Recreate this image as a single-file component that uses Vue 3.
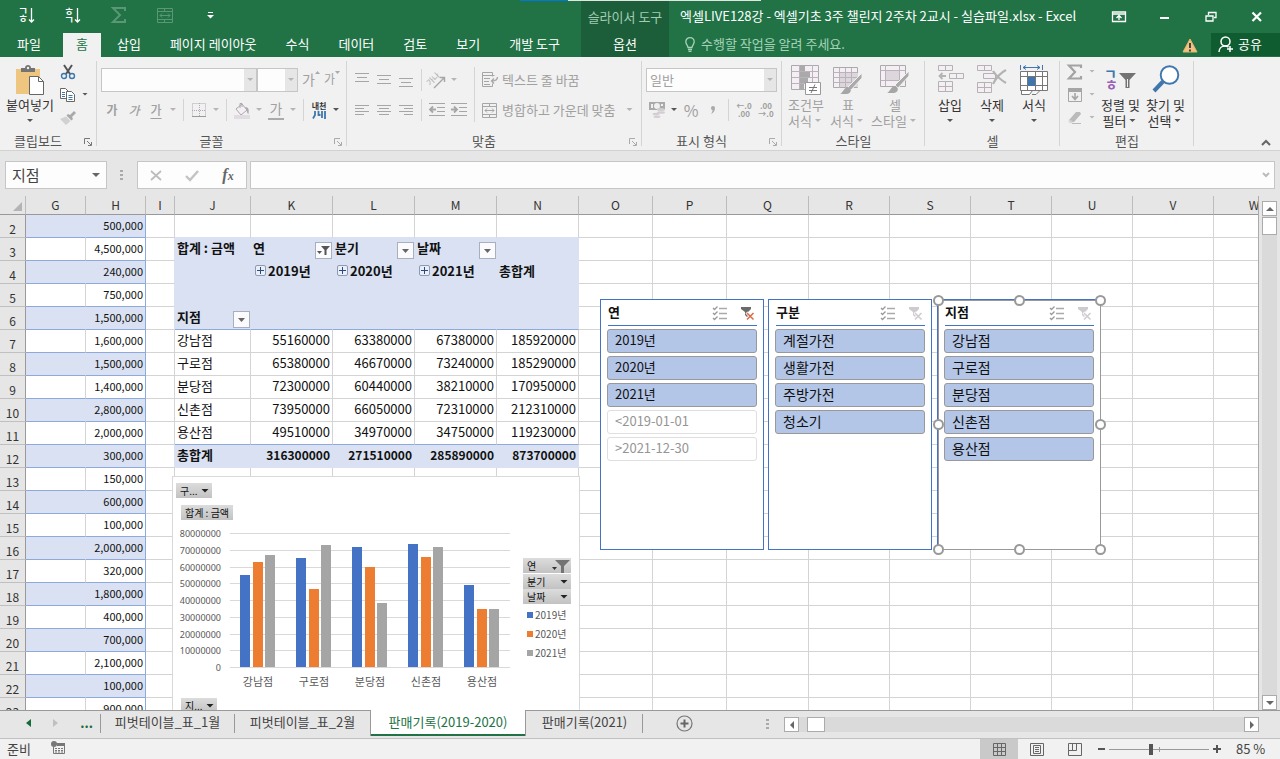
<script setup>
const tabs = ['삽입', '페이지 레이아웃', '수식', '데이터', '검토', '보기', '개발 도구']

const columns = [
  ['G', 60], ['H', 60], ['I', 29], ['J', 76], ['K', 82], ['L', 82], ['M', 82], ['N', 82],
  ['O', 74], ['P', 74], ['Q', 82], ['R', 81], ['S', 81], ['T', 81], ['U', 81], ['V', 81], ['W', 81],
].map(([name, width]) => ({ name, width }))
const tableWidth = 26 + columns.reduce((sum, c) => sum + c.width, 0)

const amounts = [
  '500,000', '4,500,000', '240,000', '750,000', '1,500,000', '1,600,000', '1,500,000', '1,400,000',
  '2,800,000', '2,000,000', '300,000', '150,000', '600,000', '100,000', '2,000,000', '320,000',
  '1,800,000', '400,000', '700,000', '2,100,000', '100,000', '900,000',
]

const pivot = {
  J3: { text: '합계 : 금액' },
  K3: { text: '연', filter: 'active' },
  L3: { text: '분기', filter: 'plain' },
  M3: { text: '날짜', filter: 'plain' },
  K4: { text: '2019년', expand: true },
  L4: { text: '2020년', expand: true },
  M4: { text: '2021년', expand: true },
  N4: { text: '총합계' },
  J6: { text: '지점', filter: 'plain' },
}
const pivotRows = [
  ['강남점', 55160000, 63380000, 67380000, 185920000],
  ['구로점', 65380000, 46670000, 73240000, 185290000],
  ['분당점', 72300000, 60440000, 38210000, 170950000],
  ['신촌점', 73950000, 66050000, 72310000, 212310000],
  ['용산점', 49510000, 34970000, 34750000, 119230000],
  ['총합계', 316300000, 271510000, 285890000, 873700000],
]
pivotRows.forEach((values, r) => {
  values.forEach((v, c) => {
    pivot['JKLMN'[c] + (7 + r)] = { text: String(v), number: c > 0 }
  })
})

function cellClass(name, row) {
  const cls = []
  const even = row % 2 === 0
  if (name === 'G' || name === 'H') {
    cls.push('band')
    if (even) cls.push('fill')
    if (name === 'G' && even) cls.push('joined')
    if (name === 'H') cls.push('amount')
  }
  const headRow = (row >= 3 && row <= 6) || row === 12
  if (name === 'I' && headRow) cls.push('joined')
  if ('JKLMN'.includes(name)) {
    if (headRow) cls.push('fill', 'joined', 'strong', 'flat')
    if (row === 2) cls.push('flat')
    if (row === 6 || row === 11) cls.push('ruled')
    if (pivot[name + row]?.number) cls.push('number')
  }
  return cls
}

const rows = amounts.map((amount, i) => {
  const n = i + 2
  return {
    n,
    cells: columns.map((c) => ({
      key: c.name + n,
      cls: cellClass(c.name, n),
      ...(c.name === 'H' ? { text: amount } : pivot[c.name + n] || {}),
    })),
  }
})

const slicers = [
  { id: 'year', title: '연', on: ['2019년', '2020년', '2021년'], off: ['<2019-01-01', '>2021-12-30'], filtered: true },
  { id: 'kind', title: '구분', on: ['계절가전', '생활가전', '주방가전', '청소기'], off: [] },
  { id: 'branch', title: '지점', on: ['강남점', '구로점', '분당점', '신촌점', '용산점'], off: [], selected: true },
]

const seriesColors = ['#4472c4', '#ed7d31', '#a5a5a5']
const barOffsets = [0, 13, 25]
const groups = pivotRows.slice(0, 5).map((r, g) => ({
  label: r[0],
  cx: 85 + g * 56,
  bars: r.slice(1, 4).map((v, s) => {
    const h = Math.round((v / 80000000) * 133)
    return { x: 67 + g * 56 + barOffsets[s], y: 190 - h, h, color: seriesColors[s] }
  }),
}))
const ticks = Array.from({ length: 9 }, (_, i) => ({
  label: String(i * 10000000),
  y: Math.round(190 - i * 16.75),
}))
const legend = ['2019년', '2020년', '2021년']
const aligns = [
  { name: '위쪽 맞춤', d: 'M1 3.5h14M3 7.5h10M1 11.5h14' },
  { name: '가운데 맞춤', d: 'M1 5.5h14M3 9.5h10M1 13.5h14' },
  { name: '아래쪽 맞춤', d: 'M1 8.5h14M3 12.5h10M1 16.5h14' },
]
const hAligns = [
  { name: '왼쪽 맞춤', d: 'M1 2.5h14M1 5.5h9M1 8.5h14M1 11.5h9' },
  { name: '중앙 맞춤', d: 'M1 2.5h14M3 5.5h10M1 8.5h14M3 11.5h10' },
  { name: '오른쪽 맞춤', d: 'M1 2.5h14M6 5.5h9M1 8.5h14M6 11.5h9' },
]
</script>

<template>
  <div class="app">
    <header class="top">
      <div class="strip"><i></i><b></b></div>
      <div class="quick">
        <button aria-label="오름차순 정렬">
          <svg width="16" height="18"><text x="-1" y="9" class="jamo">ㄱ</text><text x="-1" y="17" class="jamo">ㅎ</text><path d="M12.500 2v14M10 13.500l2.500 2.500 2.500-2.500" class="w" /></svg>
        </button>
        <button aria-label="내림차순 정렬">
          <svg width="16" height="18"><text x="-1" y="10" class="jamo">ㅎ</text><text x="-1" y="18" class="jamo">ㄱ</text><path d="M12.500 2v14M10 13.500l2.500 2.500 2.500-2.500" class="w" /></svg>
        </button>
        <button aria-label="합계" class="dim">
          <svg width="16" height="18"><path d="M14 5V2H2l7 7-7 7h12v-3" fill="none" stroke="#5a9774" stroke-width="2" /></svg>
        </button>
        <button aria-label="병합" class="dim">
          <svg width="16" height="18" fill="none" stroke="#5a9774"><path d="M.5 2.500h15v14H.5zM.5 5.500h15M.5 13.500h15M7.500 2.500v3M7.500 13.500v3M3 9.500h10M5 7.500l-2 2 2 2M11 7.500l2 2-2 2" /></svg>
        </button>
        <button aria-label="빠른 실행 사용자 지정">
          <svg width="8" height="8"><path d="M1 1.500h5" stroke="#fff" /><path d="M0 4h7L3.500 7.500z" fill="#fff" /></svg>
        </button>
      </div>
      <div class="context-name">슬라이서 도구</div>
      <div class="titlebar">
        <span class="doc">엑셀LIVE128강 - 엑셀기초 3주 챌린지 2주차 2교시 - 실습파일.xlsx - Excel</span>
        <div class="controls">
          <button aria-label="리본 메뉴 표시 옵션"><svg width="14" height="12" fill="none" stroke="#fff"><path d="M.5 1h13v9.500H.5zM.5 3h13M7 9V5M4.500 7L7 4.500 9.500 7" stroke-width="1.300" /></svg></button>
          <button aria-label="최소화"><svg width="12" height="12"><path d="M1 7h9" stroke="#fff" stroke-width="2" /></svg></button>
          <button aria-label="이전 크기로"><svg width="12" height="12" fill="none" stroke="#fff"><path d="M1 5h7v5H1zM3.500 4V1.500H11v5H9" stroke-width="1.300" /></svg></button>
          <button aria-label="닫기"><svg width="12" height="12"><path d="M1.500 1.500l8.500 8.500M10 1.500L1.500 10" stroke="#fff" stroke-width="2.200" /></svg></button>
        </div>
      </div>
      <nav class="tabs">
        <button class="file">파일</button>
        <button class="on">홈</button>
        <button v-for="t in tabs" :key="t">{{ t }}</button>
      </nav>
      <button class="context-tab">옵션</button>
      <div class="assist">
        <label class="tell">
          <svg width="10" height="15" fill="none" stroke="#a6d2b8"><path d="M3 10.500C3 8.500.8 7.500.8 4.800A4.200 4.200 0 0 1 9.200 4.800C9.200 7.500 7 8.500 7 10.500zM3 12.500h4M3.500 14.300h3" stroke-width="1.300" /></svg>
          <input type="text" placeholder="수행할 작업을 알려 주세요." />
        </label>
        <svg class="warn" width="16" height="15"><path d="M8 1l7 13H1z" fill="#f0c383" stroke="#e8b56c" stroke-linejoin="round" /><path d="M8 5v5M8 11.500v2" stroke="#444" stroke-width="2" /></svg>
        <button class="share">
          <svg width="16" height="17" fill="none" stroke="#fff" stroke-width="1.500"><circle cx="7.500" cy="5.500" r="4.500" /><path d="M1 16c0-4 3-6 6-6 1.500 0 2.500.4 3.500 1M12 10v6M9 13h6" /></svg>
          <span>공유</span>
        </button>
      </div>
    </header>

    <section class="ribbon">
      <div class="group g-clip">
        <div class="body">
          <button class="big">
            <svg width="30" height="30"><path d="M1 4h24v25H1z" fill="#eec680" /><path d="M6 7V3h4c0-4 6-4 6 0h4v4z" fill="#737373" /><circle cx="13" cy="3" r="1.200" fill="#f1f1f1" /><path d="M14.500 11.500h9l5 5v13h-14z" fill="#fff" stroke="#666" /><path d="M23.500 11.500v5h5" fill="none" stroke="#666" /></svg>
            <span>붙여넣기</span><i class="caret"></i>
          </button>
          <div class="stack">
            <div><button class="ico" aria-label="잘라내기"><svg width="16" height="16" fill="none"><path d="M4 1l6 9M12 1L6 10" stroke="#555" stroke-width="2" /><circle cx="4" cy="12" r="2.500" stroke="#3e76ad" stroke-width="1.400" /><circle cx="12" cy="12" r="2.500" stroke="#3e76ad" stroke-width="1.400" /></svg></button></div>
            <div><button class="ico" aria-label="복사"><svg width="16" height="16" fill="#fff" stroke="#666"><path d="M.5 1.500h5l3 3v7h-8z" /><path d="M6.500 4.500h5l3 3v7h-8z" /><path d="M2 5.500h3M2 7.500h3M2 9.500h3M8.500 8.500h4M8.500 10.500h4M8.500 12.500h4" stroke="#3e76ad" /></svg></button><i class="caret"></i></div>
            <div><button class="ico" aria-label="서식 복사"><svg width="16" height="16"><path d="M14 1l2 2-4 4 1 2-1.500 1.500-5-5L8 4l2 1z" fill="#a9a9a9" /><path d="M6 6.500l4.500 4.500L6 15 0 9z" fill="#d3d0d3" /></svg></button></div>
          </div>
        </div>
        <div class="foot"><span>클립보드</span><button class="launch" aria-label="클립보드 옵션"><svg width="8" height="8" fill="none" stroke="#777"><path d="M.5 6V.5H6M3 3l4 4M7.500 4v3.500H4" /></svg></button></div>
      </div>

      <div class="group g-font">
        <div class="body rows">
          <div class="row">
            <span class="combo wide"><select aria-label="글꼴" disabled><option></option></select><i class="caret off"></i></span>
            <span class="combo narrow"><select aria-label="글꼴 크기" disabled><option></option></select><i class="caret off"></i></span>
            <button class="ico off grow" aria-label="글꼴 크기 크게"><span class="lg">가</span><svg width="5" height="4"><path d="M0 3h5L2.500 0z" fill="#aaa" /></svg></button>
            <button class="ico off grow" aria-label="글꼴 크기 작게"><span>가</span><svg width="5" height="4"><path d="M0 0h5L2.500 3z" fill="#aaa" /></svg></button>
          </div>
          <div class="row">
            <button class="ico off ga"><b>가</b></button>
            <button class="ico off ga"><em>가</em></button>
            <button class="ico off ga"><u>가</u></button><i class="caret off"></i>
            <i class="sep"></i>
            <button class="ico" aria-label="테두리"><svg width="14" height="15" fill="none" stroke="#b3a9b3"><path d="M.5.5h13v13H.5zM7.500 0v13M0 7.500h13" stroke-dasharray="1 1" /><path d="M0 13.500h14" stroke="#999" /></svg></button><i class="caret off"></i>
            <i class="sep"></i>
            <button class="ico" aria-label="채우기 색"><svg width="16" height="17"><path d="M2 7l6-5 5 6-6 5z" fill="#f5eff5" stroke="#aaa" /><path d="M6 6V1.500h2V5" fill="none" stroke="#aaa" /><path d="M11 5c4 0 4 3 3.500 7-1 0-1.500-2-2-4z" fill="#aaa" /><path d="M0 13h16v4H0z" fill="#e2dbe2" /></svg></button><i class="caret off"></i>
            <button class="ico off color">가</button><i class="caret off"></i>
            <i class="sep"></i>
            <button class="ico phon" aria-label="윗주 필드"><span>내천</span><svg width="14" height="8"><path d="M3 0v4L1 7.500M6.500 0v4l2 0M10 0v7M13 0v8" fill="none" stroke="#3e76ad" stroke-width="1.800" /></svg></button><i class="caret"></i>
          </div>
        </div>
        <div class="foot"><span>글꼴</span><button class="launch off" aria-label="글꼴 옵션"><svg width="8" height="8" fill="none" stroke="#aaa"><path d="M.5 6V.5H6M3 3l4 4M7.500 4v3.500H4" /></svg></button></div>
      </div>

      <div class="group g-align">
        <div class="body">
          <div class="rows block">
            <div class="row">
              <button v-for="a in aligns" :key="a.name" class="ico" :aria-label="a.name"><svg width="16" height="20" stroke="#a6a6a6"><path :d="a.d" /></svg></button>
              <i class="sep"></i>
              <button class="ico" aria-label="방향"><svg width="18" height="18" fill="none" stroke="#a6a6a6"><text x="-1" y="10" class="tilt">가나</text><path d="M6 17l10-10M12 6.500h4.500V11" stroke-width="1.400" /></svg></button><i class="caret off"></i>
            </div>
            <div class="row">
              <button v-for="a in hAligns" :key="a.name" class="ico" :aria-label="a.name"><svg width="16" height="14" stroke="#a6a6a6"><path :d="a.d" /></svg></button>
              <i class="sep"></i>
              <button class="ico" aria-label="내어쓰기"><svg width="16" height="14" fill="none" stroke="#a6a6a6"><path d="M0 .5h16M8 4.500h8M8 8.500h8M0 12.500h16" /><path d="M1 6.500h6M4 3.500l-3 3 3 3" stroke-width="1.800" /></svg></button>
              <button class="ico" aria-label="들여쓰기"><svg width="16" height="14" fill="none" stroke="#a6a6a6"><path d="M0 .5h16M8 4.500h8M8 8.500h8M0 12.500h16" /><path d="M0 6.500h6M3 3.500l3 3-3 3" stroke-width="1.800" /></svg></button>
            </div>
          </div>
          <i class="sep tall"></i>
          <div class="rows">
            <div class="row"><button class="labelled"><svg width="16" height="16" fill="none" stroke="#a6a6a6"><path d="M10.500 4.500V.5H.5v14h10v-3M.5 3.500h12M2 6.500h6M2 9.500h5M2 12.500h6" /><path d="M15.500 5c0 3-2 4-6 4M12 6.500L9.500 9l2.500 2.500" stroke-width="1.300" /></svg>텍스트 줄 바꿈</button></div>
            <div class="row"><button class="labelled"><svg width="16" height="15" fill="none" stroke="#a6a6a6"><path d="M.5.5h14v14H.5zM.5 3.500h14M.5 11.500h14M7.500.5v3M7.500 11.500v3M3 7.500h9M5 5.500l-2 2 2 2M10 5.500l2 2-2 2" /></svg>병합하고 가운데 맞춤</button><i class="caret off gap"></i></div>
          </div>
        </div>
        <div class="foot"><span>맞춤</span><button class="launch" aria-label="맞춤 옵션"><svg width="8" height="8" fill="none" stroke="#aaa"><path d="M.5 6V.5H6M3 3l4 4M7.500 4v3.500H4" /></svg></button></div>
      </div>

      <div class="group g-num">
        <div class="body rows">
          <div class="row"><span class="combo full"><select aria-label="표시 형식" disabled><option>일반</option></select><i class="caret off"></i></span></div>
          <div class="row">
            <button class="ico" aria-label="회계 표시 형식"><svg width="17" height="16"><path d="M0 0h16v8H0z" fill="#aaa" /><circle cx="8" cy="4" r="3" fill="#f1f1f1" /><path d="M2 2h2v4H2zM12 2h2v2h-2z" fill="#f1f1f1" /><path d="M8 8h8v6H8z" fill="#f1f1f1" /><g fill="#d3ced3"><ellipse cx="12" cy="7.500" rx="4" ry="1.500" /><ellipse cx="12" cy="10.500" rx="4" ry="1.300" /><ellipse cx="7" cy="12" rx="3.500" ry="1.200" /><ellipse cx="8" cy="14.700" rx="3.500" ry="1.200" /></g></svg></button><i class="caret"></i>
            <button class="ico off pct">%</button>
            <button class="ico off" aria-label="쉼표 스타일"><svg width="6" height="10"><path d="M1 3a2 2 0 1 1 4 0c0 3-1.500 5-4 6 1-1.500 1.500-2.500 1.500-4C1.500 5 1 4 1 3z" fill="#aaa" /></svg></button>
            <i class="sep"></i>
            <button class="ico off dec" aria-label="자릿수 늘림"><span>←.0</span><span>.00</span></button>
            <button class="ico off dec" aria-label="자릿수 줄임"><span>.00</span><span>→.0</span></button>
          </div>
        </div>
        <div class="foot"><span>표시 형식</span><button class="launch" aria-label="표시 형식 옵션"><svg width="8" height="8" fill="none" stroke="#aaa"><path d="M.5 6V.5H6M3 3l4 4M7.500 4v3.500H4" /></svg></button></div>
      </div>

      <div class="group g-style">
        <div class="body">
          <button class="big off">
            <svg width="30" height="30"><path d="M.5.5h27v24H.5z" fill="#f5eff5" stroke="#aaa" /><path d="M8 1h6v6H8zM8 7h11v5H8zM8 12h9v6H8zM8 18h5v6H8z" fill="#aaa" /><path d="M.5 6.500h27M.5 12.500h27M.5 18.500h27M8.500 0v24M21.500 0v24" stroke="#b9b4b9" fill="none" /><path d="M14.500 17.500h15v12h-15z" fill="#fff" stroke="#999" /><path d="M18 22.500h8M18 25.500h8M24 19.500l-4 8.500" stroke="#777" /></svg>
            <span>조건부</span><span>서식<i class="caret off"></i></span>
          </button>
          <button class="big off">
            <svg width="30" height="30"><path d="M.5 2.500h24v20H.5z" fill="#f5eff5" stroke="#aaa" /><path d="M7 8h18v14H7z" fill="#ddd6dd" /><path d="M.5 7.500h24M.5 12.500h24M.5 17.500h24M6.500 3v20M12.500 3v20M18.500 3v20" stroke="#b9b4b9" /><path d="M29 8v5L18 25l-3-3z" fill="#aaa" stroke="#f1f1f1" /><path d="M7 29c3-1 4-7 8-7 4 1 4 6-1 7z" fill="#a6a6a6" /></svg>
            <span>표</span><span>서식<i class="caret off"></i></span>
          </button>
          <button class="big off wide3">
            <svg width="30" height="30"><path d="M.5.5h25v21H.5z" fill="#f5eff5" stroke="#aaa" /><path d="M.5 5.500h25M.5 15.500h25M5.500 0v21M19.500 0v21" stroke="#b9b4b9" /><path d="M6 6h13v9H6z" fill="#ddd6dd" /><path d="M29 6v5L18 23l-3-3z" fill="#aaa" stroke="#f1f1f1" /><path d="M7 28c3-1 4-7 8-7 4 1 4 6-1 7z" fill="#a6a6a6" /></svg>
            <span>셀</span><span>스타일<i class="caret off"></i></span>
          </button>
        </div>
        <div class="foot"><span>스타일</span></div>
      </div>

      <div class="group g-cell">
        <div class="body">
          <button class="big">
            <svg width="30" height="30" fill="#f5eff5" stroke="#b3b3b3"><path d="M3.500.5h14v5h-14zM10.500.5v5M14.500 8.500h14v5h-14zM21.500 8.500v5M3.500 16.500h14v10h-14zM10.500 16.500v10M3.500 21.500h14" /><path d="M11 11H4.500M7.500 8l-3 3 3 3" fill="none" stroke-width="1.800" /></svg>
            <span>삽입</span><i class="caret"></i>
          </button>
          <button class="big">
            <svg width="30" height="30" fill="#f5eff5" stroke="#b3b3b3"><path d="M.5.5h14v5H.5zM7.500.5v5M6.500 8.500h12v5h-12zM.5 17.500h14v10H.5zM7.500 17.500v10M.5 22.500h14" /><path d="M16 6c4 6 8 9 13 12M29 5c-6 3-10 8-13 14" fill="none" stroke-width="2.200" /></svg>
            <span>삭제</span><i class="caret"></i>
          </button>
          <button class="big">
            <svg width="30" height="32" fill="#fff" stroke="#777"><path d="M1.500 6.500h27v19h-27zM1.500 11.500h27M1.500 20.500h27M8.500 6.500v19M16.500 6.500v19M23.500 6.500v19M2.500 25.500v4h8l3-4M13 29.500h4l4-4" /><path d="M9 12h7v9H9z" fill="#3e76ad" stroke="none" /><path d="M1.500 0v5M23.500 0v5M4 2.500h17M7 .5l-3 2 3 2M18 .5l3 2-3 2" stroke="#3e76ad" fill="none" /></svg>
            <span>서식</span><i class="caret"></i>
          </button>
        </div>
        <div class="foot"><span>셀</span></div>
      </div>

      <div class="group g-edit">
        <div class="body">
          <div class="stack">
            <div><button class="ico" aria-label="자동 합계"><svg width="16" height="16"><path d="M14 4V1.500H2L8 8l-6 6.500h12V12" fill="none" stroke="#a3a3a3" stroke-width="2.200" /></svg></button><i class="caret off"></i></div>
            <div><button class="ico" aria-label="채우기"><svg width="16" height="16" fill="none" stroke="#a6a6a6"><path d="M1.500 1.500h13v13h-13z" /><path d="M1 1h14v4H1z" fill="#a6a6a6" stroke="none" /><path d="M8 6v6M5 9l3 3.500L11 9" stroke-width="1.600" /></svg></button><i class="caret off"></i></div>
            <div><button class="ico" aria-label="지우기"><svg width="16" height="14"><path d="M9 1h4l1 2-7 8H3L2 9z" fill="#bbb" /><path d="M2 8l4 3-2 1.500L1.500 11z" fill="#d8d4d8" /><path d="M5 12.500h9" stroke="#bbb" /></svg></button><i class="caret off"></i></div>
          </div>
          <button class="big">
            <svg width="30" height="30"><text x="-2" y="14" class="sortk">ㄱ</text><text x="-1" y="25" class="sorth">ㅎ</text><path d="M13 8h17l-6.500 7v8h-4v-8z" fill="#737373" /><path d="M21.500 14v8" stroke="#f1f1f1" /></svg>
            <span>정렬 및</span><span>필터<i class="caret"></i></span>
          </button>
          <button class="big">
            <svg width="30" height="30"><circle cx="18.500" cy="10" r="8.800" fill="#fff" stroke="#3e76ad" stroke-width="1.900" /><path d="M12 16.500L3 26" stroke="#3e76ad" stroke-width="4" /></svg>
            <span>찾기 및</span><span>선택<i class="caret"></i></span>
          </button>
        </div>
        <div class="foot"><span>편집</span></div>
      </div>
      <button class="collapse" aria-label="리본 메뉴 축소"><svg width="10" height="7"><path d="M1 6l4-4 4 4" fill="none" stroke="#666" stroke-width="2" /></svg></button>
    </section>

    <section class="formula">
      <div class="namebox"><input type="text" aria-label="이름 상자" value="지점" /><i class="caret name"></i></div>
      <span class="grip"></span>
      <div class="fxbox">
        <button aria-label="취소"><svg width="12" height="11"><path d="M1 1l10 9M11 1L1 10" stroke="#bdbdbd" stroke-width="1.800" /></svg></button>
        <button aria-label="입력"><svg width="14" height="11"><path d="M1 6l4 4 8-9" fill="none" stroke="#c3c3c3" stroke-width="2.400" /></svg></button>
        <button class="fx" aria-label="함수 삽입"><i>f</i><i>x</i></button>
      </div>
      <div class="entry"><input type="text" aria-label="수식 입력줄" /><svg width="8" height="6"><path d="M1 1l3 3 3-3" fill="none" stroke="#bbb" stroke-width="2" /></svg></div>
    </section>

    <section class="sheet">
      <div class="canvas">
        <table class="grid" :style="{ width: tableWidth + 'px' }">
          <colgroup><col class="rowhead" /><col v-for="c in columns" :key="c.name" :style="{ width: c.width + 'px' }" /></colgroup>
          <thead>
            <tr><th class="corner"><svg width="9" height="9"><path d="M9 0v9H0z" fill="#b4b4b4" /></svg></th><th v-for="c in columns" :key="c.name" scope="col">{{ c.name }}</th></tr>
          </thead>
          <tbody>
            <tr v-for="r in rows" :key="r.n">
              <th scope="row">{{ r.n }}</th>
              <td v-for="c in r.cells" :key="c.key" :class="c.cls">
                <div v-if="c.filter || c.expand" class="tools">
                  <button v-if="c.expand" class="plus" aria-label="확장"></button>
                  <span>{{ c.text }}</span>
                  <button v-if="c.filter" class="filter" aria-label="필터">
                    <svg v-if="c.filter === 'active'" width="13" height="13"><path d="M4 2h9L9.500 6v5h-2V6z" fill="#555" /><path d="M0 7h5L2.500 10z" fill="#555" /></svg>
                    <svg v-else width="7" height="4"><path d="M0 0h7L3.500 4z" fill="#666" /></svg>
                  </button>
                </div>
                <template v-else>{{ c.text }}</template>
              </td>
            </tr>
          </tbody>
        </table>

        <figure class="chart">
          <svg width="406" height="234" role="img" aria-label="지점별 합계 금액">
            <g v-for="t in ticks" :key="t.label">
              <path :d="`M57 ${t.y}.5h280`" stroke="#d9d9d9" />
              <text x="48" :y="t.y + 4" class="axis">{{ t.label }}</text>
            </g>
            <g v-for="g in groups" :key="g.label">
              <rect v-for="b in g.bars" :key="b.x" :x="b.x" :y="b.y" width="10" :height="b.h" :fill="b.color" />
              <text :x="g.cx" y="209" class="cat">{{ g.label }}</text>
            </g>
            <g v-for="(l, i) in legend" :key="l">
              <rect x="354" :y="135 + i * 19" width="6" height="6" :fill="seriesColors[i]" />
              <text x="362" :y="142 + i * 19" class="leg">{{ l }}</text>
            </g>
          </svg>
          <button class="field f-page">구...<i class="caret blk"></i></button>
          <button class="field f-value">합계 : 금액</button>
          <div class="legend-fields">
            <button class="field">연<svg width="18" height="14"><path d="M3 1h15l-6 6v7H9V7z" fill="#737373" /><path d="M0 8h5L2.500 11z" fill="#333" /></svg></button>
            <button class="field">분기<i class="caret blk"></i></button>
            <button class="field">날짜<i class="caret blk"></i></button>
          </div>
          <button class="field f-axis">지...<i class="caret blk"></i></button>
        </figure>

        <section v-for="s in slicers" :key="s.id" class="slicer" :class="[s.id, { selected: s.selected }]">
          <header>
            <h2>{{ s.title }}</h2>
            <button aria-label="다중 선택"><svg width="15" height="14" fill="none" stroke="#999"><path d="M6 2.500h8M6 7.500h8M6 12.500h8" stroke="#aaa" stroke-width="1.300" /><path d="M0 2l1.500 1.500L4.500.5M0 7l1.500 1.500L4.500 5.500M0 12l1.500 1.500L4.500 10.500" stroke-width="1.300" /></svg></button>
            <button aria-label="필터 지우기"><svg width="15" height="14"><path d="M1 1h10v2L8 6v6L5 9V6L1 3z" :fill="s.filtered ? '#6b6b6b' : '#cfcacf'" /><path d="M6.500 6.500l7 7M13.500 6.500l-7 7" stroke="#fff" stroke-width="3" /><path d="M7 7l6.500 6.500M13.500 7L7 13.500" :stroke="s.filtered ? '#d9694a' : '#cfcacf'" stroke-width="1.500" /></svg></button>
          </header>
          <button v-for="o in s.on" :key="o" class="opt">{{ o }}</button>
          <button v-for="o in s.off" :key="o" class="opt empty">{{ o }}</button>
          <div v-if="s.selected" class="frame"><i v-for="n in 8" :key="n" :class="'h' + n"></i></div>
        </section>
      </div>
      <div class="vscroll">
        <button class="sb" aria-label="위로"><svg width="8" height="4"><path d="M0 4h8L4 0z" fill="#666" /></svg></button>
        <div class="track"><i></i></div>
        <button class="sb" aria-label="아래로"><svg width="8" height="4"><path d="M0 0h8L4 4z" fill="#666" /></svg></button>
      </div>
    </section>

    <nav class="sheets">
      <div class="move">
        <button aria-label="이전 시트"><svg width="5" height="8"><path d="M5 0v8L0 4z" fill="#156b3a" /></svg></button>
        <button aria-label="다음 시트"><svg width="5" height="8"><path d="M0 0v8l5-4z" fill="#c0c0c0" /></svg></button>
        <button class="more">...</button>
      </div>
      <button class="tab">피벗테이블_표_1월</button>
      <button class="tab last">피벗테이블_표_2월</button>
      <button class="tab on">판매기록(2019-2020)</button>
      <button class="tab short">판매기록(2021)</button>
      <button class="add" aria-label="새 시트"><svg width="17" height="17" fill="none" stroke="#777"><circle cx="8.500" cy="8.500" r="7.500" stroke-width="1.200" /><path d="M4.500 8.500h8M8.500 4.500v8" stroke="#666" stroke-width="2" /></svg></button>
      <span class="grip small"></span>
      <div class="hscroll">
        <button class="sb" aria-label="왼쪽"><svg width="4" height="8"><path d="M4 0v8L0 4z" fill="#666" /></svg></button>
        <div class="track"><i></i></div>
        <button class="sb" aria-label="오른쪽"><svg width="4" height="8"><path d="M0 0v8l4-4z" fill="#666" /></svg></button>
      </div>
    </nav>

    <footer class="status">
      <span>준비</span>
      <svg class="macro" width="14" height="14" fill="none" stroke="#777"><path d="M5 2.500h8.500v10h-11V6" /><path d="M6 2h8v3H6z" fill="#777" stroke="none" /><path d="M4 7.500h2M7 7.500h2M10 7.500h2M4 9.500h2M7 9.500h2M10 9.500h2M4 11h2M7 11h2M10 11h2" /><circle cx="3" cy="3" r="3" fill="#777" stroke="none" /></svg>
      <div class="views">
        <button class="on" aria-label="기본"><svg width="13" height="13" fill="none" stroke="#666"><path d="M.5.5h12v12H.5zM.5 4.500h12M.5 8.500h12M4.500.5v12M8.500.5v12" /></svg></button>
        <button aria-label="페이지 레이아웃"><svg width="14" height="13" fill="none" stroke="#666"><path d="M.5.5h13v12H.5zM3.500 2.500h7v8h-7zM5 4.500h4M5 6.500h4M5 8.500h4" /></svg></button>
        <button aria-label="페이지 나누기 미리 보기"><svg width="14" height="13" fill="none" stroke="#666"><path d="M.5.5h13v12H.5zM.5 7.500h8v-7M4.500.5v7" /></svg></button>
      </div>
      <div class="zoom">
        <button aria-label="축소"><svg width="7" height="8"><path d="M0 4h7" stroke="#555" stroke-width="2" /></svg></button>
        <input type="range" min="0" max="100" value="42" aria-label="확대/축소" />
        <button aria-label="확대"><svg width="8" height="8"><path d="M0 4h8M4 0v8" stroke="#555" stroke-width="2" /></svg></button>
        <output>85 %</output>
      </div>
    </footer>
  </div>
</template>

<style>
body { margin: 0; overflow: hidden; }
</style>

<style scoped>
.app, .app * { box-sizing: border-box; }
.app {
  display: flex; flex-direction: column; height: 100vh; overflow: hidden;
  background: #e6e6e6; color: #444;
  font: 13px/16px "Noto Sans CJK KR", "Noto Sans", sans-serif;
}
button, input, select { font: inherit; color: inherit; }
button { border: 0; padding: 0; margin: 0; background: none; }
svg { display: block; flex: none; overflow: visible; }
.caret { flex: none; width: 12px; height: 4px; background: #555; clip-path: polygon(3px 0, 9px 0, 6px 3px); }
.caret.off { background: #b5b5b5; }
.caret.blk { background: #222; clip-path: polygon(2px 0, 10px 0, 6px 4px); }

.top { position: relative; flex: none; display: grid; grid-template-columns: 581px 88px minmax(0, 1fr); grid-template-rows: 33px 24px; background: #217346; color: #fff; }
.strip { position: absolute; top: 0; left: 520px; display: flex; height: 1px; }
.strip i { width: 48px; background: #0078d7; }
.strip b { width: 193px; background: #dfe5e1; }
.quick { display: flex; align-items: center; padding: 0 0 4px 4px; }
.quick button { width: 46px; display: flex; justify-content: center; }
.jamo { font-size: 11px; font-weight: 500; fill: #fff; }
.w { fill: none; stroke: #fff; stroke-width: 1.300; }
.context-name { background: #1b5e39; color: #a3ccb4; text-align: center; line-height: 34px; white-space: nowrap; }
.context-tab { background: #1b5e39; padding-bottom: 2px; }
.titlebar { display: flex; align-items: center; justify-content: space-between; padding-left: 11px; min-width: 0; }
.doc { white-space: nowrap; overflow: hidden; text-overflow: ellipsis; line-height: 24px; padding-bottom: 2px; }
.controls { display: flex; flex: none; }
.controls button { width: 46px; height: 28px; display: flex; align-items: center; justify-content: center; }
.tabs { display: flex; gap: 3px; }
.tabs button { padding: 0 13px 2px; white-space: nowrap; }
.tabs .file { width: 60px; padding: 0 2px 2px 0; }
.tabs .on { background: #f1f1f1; color: #217346; }
.assist { display: flex; align-items: center; padding-left: 16px; }
.tell { display: flex; align-items: center; gap: 6px; flex: 1; padding-bottom: 2px; }
.tell input { flex: 1; min-width: 0; border: 0; padding: 0; background: none; outline: 0; }
.tell input::placeholder { color: #a6d2b8; opacity: 1; }
.warn { margin-right: 13px; }
.share { display: flex; align-items: center; gap: 4px; width: 69px; height: 23px; padding-left: 7px; margin-bottom: 1px; background: #0e5c2f; }
.share span { padding-bottom: 2px; }

.ribbon { position: relative; flex: none; display: flex; height: 94px; background: #f1f1f1; border-bottom: 1px solid #d2d2d2; white-space: nowrap; }
.group { position: relative; flex: none; padding-top: 3px; display: flex; flex-direction: column; }
.group::after { content: ""; position: absolute; right: 0; top: 4px; bottom: 4px; width: 1px; background: #d4d4d4; }
.g-clip { width: 97px; }
.g-font { width: 250px; }
.g-align { width: 295px; }
.g-num { width: 140px; }
.g-style { width: 143px; }
.g-cell { width: 135px; }
.g-edit { width: 134px; }
.body { display: flex; height: 73px; padding: 0 4px; }
.g-clip .body { padding: 0 3px; }
.g-style .body { padding: 0 3px; }
.foot { display: flex; align-items: center; line-height: 16px; color: #555; }
.foot span { flex: 1; text-align: center; }
.launch { margin: 2px 5px 0 8px; }
.rows { display: flex; flex-direction: column; gap: 6px; padding-top: 8px; }
.rows.body { padding-top: 8px; }
.block { width: 119px; }
.row { display: flex; align-items: center; height: 24px; }
.ico { flex: none; width: 22px; height: 22px; display: flex; align-items: center; justify-content: center; }
.ico.off { color: #a0a0a0; }
.ga { font-size: 12px; }
.ga u { text-underline-offset: 3px; font-weight: 500; }
.ga em { font-weight: 500; }
.grow { align-items: flex-start; font-size: 12px; padding-top: 2px; margin-left: 2px; }
.grow .lg { font-size: 14px; }
.grow + .grow { margin-left: -1px; }
.color { height: 20px; width: 16px; margin: 0 3px; padding-bottom: 2px; font-size: 14px; border-bottom: 2px solid #aaa; }
.phon { flex-direction: column; font-size: 8px; line-height: 10px; font-weight: 700; color: #333; }
.pct { font-size: 16px; }
.dec { flex-direction: column; font-size: 8px; line-height: 8px; font-weight: 700; }
.tilt { font-size: 8px; fill: #a6a6a6; stroke: none; transform: rotate(-45deg); transform-origin: 7px 9px; }
.sep { flex: none; width: 1px; height: 22px; margin: 0 4px; background: #d4d4d4; }
.sep.tall { height: 55px; margin-top: 7px; }
.labelled { display: flex; align-items: center; gap: 4px; padding-left: 3px; color: #a0a0a0; }
.caret.gap { margin-left: 8px; }
.combo { display: flex; align-items: center; position: relative; height: 24px; border: 1px solid #c6c6c6; background: #fdfdfd; }
.combo::after { content: ""; position: absolute; right: 0; top: 0; bottom: 0; width: 12px; background: #e6e6e6; }
.combo select { width: 100%; height: 100%; border: 0; padding: 0 0 0 3px; appearance: none; background: none; opacity: 1; color: #a0a0a0; }
.combo .caret { position: absolute; right: 0; z-index: 1; }
.wide { width: 157px; }
.narrow { width: 41px; }
.full { width: 131px; }
.stack > div { display: flex; align-items: center; height: 23px; width: 34px; }
.big { flex: none; display: flex; flex-direction: column; align-items: center; width: 42px; height: 73px; padding-top: 5px; color: #333; }
.big > svg { height: 30px; margin-bottom: 2px; }
.big > span { display: flex; align-items: center; line-height: 16px; }
.big > .caret { margin-top: 6px; }
.big.off { color: #a0a0a0; }
.g-clip .big { width: 54px; }
.g-style .big.wide3 { width: 52px; }
.g-edit .big { width: 45px; }
.sortk { font-size: 14px; font-weight: 700; fill: #3e76ad; }
.sorth { font-size: 14px; font-weight: 700; fill: #9a5fb8; }
.collapse { position: absolute; right: 9px; bottom: 4px; }

.formula { flex: none; display: flex; height: 45px; padding: 10px 5px 7px; }
.formula > div { display: flex; align-items: center; height: 28px; border: 1px solid #c6c6c6; background: #fdfdfd; }
.formula input { flex: 1; min-width: 0; border: 0; padding: 0; background: none; outline: 0; }
.namebox { width: 102px; padding: 0 4px 0 6px; font-size: 15px; }
.caret.name { background: #666; clip-path: polygon(2px 0, 10px 0, 6px 4px); }
.grip { width: 3px; height: 11px; margin: 9px 14px 0 13px; background: repeating-linear-gradient(#aaa 0 2px, transparent 2px 4px); }
.fxbox { width: 110px; margin-right: 3px; }
.fxbox button { width: 36px; display: flex; justify-content: center; }
.fxbox .fx { font: italic 700 16px/18px "Liberation Serif", serif; color: #666; align-items: baseline; }
.fx i + i { font-size: 12px; }
.entry { flex: 1; padding: 0 4px 0 8px; }

.sheet { flex: 1; min-height: 0; display: flex; }
.canvas { position: relative; flex: 1; min-width: 0; overflow: hidden; border-right: 1px solid #ababab; }
.grid { table-layout: fixed; border-collapse: separate; border-spacing: 0; background: #fff; color: #111; }
.rowhead { width: 26px; }
.grid th { padding: 0; font-weight: 400; font-size: 12px; background: #e6e6e6; color: #333; border-right: 1px solid #bcbcbc; }
.grid thead th { height: 19px; line-height: 18px; padding-top: 0; border-bottom: 1px solid #999; }
.grid tbody th { height: 23px; line-height: 16px; padding-top: 6px; border-right-color: #999; border-bottom: 1px solid #c0c0c0; }
.grid thead .corner { vertical-align: bottom; padding: 0 3px 3px 0; }
.corner svg { margin-left: auto; }
.grid td { height: 23px; padding: 0 2px 2px; line-height: 20px; white-space: nowrap; overflow: hidden; border-right: 1px solid #d4d4d4; border-bottom: 1px solid #d4d4d4; }
.grid td.fill { background: #d9e1f2; }
.grid td.band { border-bottom-color: #8ea9db; }
.grid td.amount { font-size: 11px; text-align: right; border-right-color: #8ea9db; }
.grid td.joined { border-right-color: #d9e1f2; }
.grid td.flat { border-bottom-color: #d9e1f2; }
.grid td.ruled { border-bottom-color: #8ea9db; }
.grid td.number { text-align: right; }
.grid td.strong { font-weight: 700; }
.grid td.strong.number { font-size: 12px; }
.tools { display: flex; height: 20px; margin-right: -2px; gap: 2px; }
.tools span { flex: 1; }
.plus { width: 11px; height: 11px; margin: 4px 0 0 2px; border: 1px solid #8b9bb5; border-radius: 2px; background: linear-gradient(#2c4a7c, #2c4a7c) center / 7px 1px no-repeat, linear-gradient(#2c4a7c, #2c4a7c) center / 1px 7px no-repeat, #e9eef7; }
.filter { flex: none; width: 17px; height: 17px; margin-top: 4px; border: 1px solid #a6b0be; background: #fbfbfd; display: flex; align-items: center; justify-content: center; }

.chart { position: absolute; left: 172px; top: 280px; margin: 0; width: 408px; height: 240px; border: 1px solid #d9d9d9; background: #fff; }
.chart text { fill: #595959; }
.axis { font-family: "Noto Sans", sans-serif; font-size: 9px; text-anchor: end; }
.cat { font-size: 11px; text-anchor: middle; }
.leg { font-size: 10px; }
.field { display: flex; align-items: center; justify-content: space-between; height: 15px; padding: 0 1px 0 4px; background: linear-gradient(#dcdcdc, #c2c2c2); color: #111; font-size: 10px; line-height: 14px; white-space: nowrap; }
.f-page, .f-value, .f-axis, .legend-fields { position: absolute; }
.f-page { left: 3px; top: 6px; width: 36px; }
.f-value { left: 8px; top: 28px; width: 52px; justify-content: center; padding: 0; }
.f-axis { left: 8px; top: 221px; width: 36px; }
.legend-fields { left: 350px; top: 81px; width: 48px; }
.legend-fields .field { width: 100%; }
.legend-fields .field:first-child { margin-bottom: 1px; }

.slicer { position: absolute; top: 103px; width: 164px; height: 251px; padding: 0 6px; border: 1px solid #4472c4; background: #fff; color: #111; }
.slicer.year { left: 600px; }
.slicer.kind { left: 768px; }
.slicer.branch { left: 937px; }
.slicer header { display: flex; align-items: center; height: 26px; margin: 0 0 3px 1px; border-bottom: 1px solid #4472c4; }
.slicer h2 { flex: 1; margin: 0; font-size: 13px; font-weight: 700; line-height: 22px; padding-bottom: 2px; }
.slicer header button { margin: 0 2px 0 10px; }
.opt { display: block; width: 150px; height: 24px; margin-bottom: 3px; padding: 0 7px 2px; border: 1px solid #999; border-radius: 3px; background: #b4c6e7; text-align: left; font-size: 14px; line-height: 20px; }
.year .opt { font-size: 13px; }
.opt.empty { border-color: #dfdfdf; background: #fff; color: #959595; }
.frame { position: absolute; left: 0; top: 0; width: 163px; height: 250px; border: 1px solid #999; pointer-events: none; }
.frame i { position: absolute; width: 11px; height: 11px; border: 2px solid #999; border-radius: 50%; background: #fff; }
.h1, .h4, .h6 { left: -6px; }
.h2, .h7 { left: 75px; }
.h3, .h5, .h8 { right: -6px; }
.h1, .h2, .h3 { top: -6px; }
.h4, .h5 { top: 118px; }
.h6, .h7, .h8 { bottom: -6px; }

.vscroll { flex: none; width: 21px; padding: 5px 3px 0; display: flex; flex-direction: column; }
.sb { flex: none; width: 15px; height: 15px; display: flex; align-items: center; justify-content: center; border: 1px solid #ababab; background: #fff; }
.track { flex: 1; background: #dadada; }
.track i { display: block; border: 1px solid #ababab; background: #fff; }
.vscroll .track i { width: 15px; height: 18px; margin-top: 1px; }

.sheets { flex: none; display: flex; height: 29px; border-top: 1px solid #999; border-bottom: 1px solid #c0c0c0; white-space: nowrap; }
.move { width: 100px; display: flex; align-items: center; padding: 0 7px 3px 26px; justify-content: space-between; }
.more { font-weight: 700; color: #156b3a; }
.sheets .tab { position: relative; height: 24px; min-width: 135px; padding: 0 12px 2px; }
.sheets .tab.short { min-width: 117px; }
.tab::after { content: ""; position: absolute; right: 0; top: 3px; bottom: 2px; width: 1px; background: #999; }
.move + .tab::before { content: ""; position: absolute; left: 0; top: 3px; bottom: 2px; width: 1px; background: #999; }
.tab.last::after { display: none; }
.sheets .tab.on { height: 26px; min-width: 156px; margin-top: -1px; padding: 0 16px 2px; background: #fff; color: #217346; border: solid #999; border-width: 0 1px; box-shadow: inset 0 -2px #217346; }
.tab.on::after { display: none; }
.add { margin: 0 0 2px 33px; }
.grip.small { margin: 8px 15px 0 auto; }
.hscroll { display: flex; width: 475px; height: 15px; margin: 6px 21px 0 0; }
.hscroll .track i { width: 18px; height: 15px; margin-left: 8px; }

.status { flex: none; display: flex; align-items: center; height: 20px; padding-left: 7px; background: #f1f1f1; }
.macro { margin: 0 auto 2px 20px; }
.views { display: flex; height: 20px; }
.views button { width: 38px; display: flex; align-items: center; justify-content: center; }
.views .on { background: #c9c9c9; }
.zoom { display: flex; align-items: center; gap: 4px; width: 186px; padding-left: 4px; }
.zoom input { width: 100px; height: 16px; margin: 0; appearance: none; background: linear-gradient(#999, #999) center / 100% 1px no-repeat, linear-gradient(#999, #999) center / 1px 5px no-repeat; }
.zoom input::-webkit-slider-thumb { appearance: none; width: 4px; height: 11px; background: #555; }
.zoom output { margin-left: 11px; white-space: nowrap; }
</style>
